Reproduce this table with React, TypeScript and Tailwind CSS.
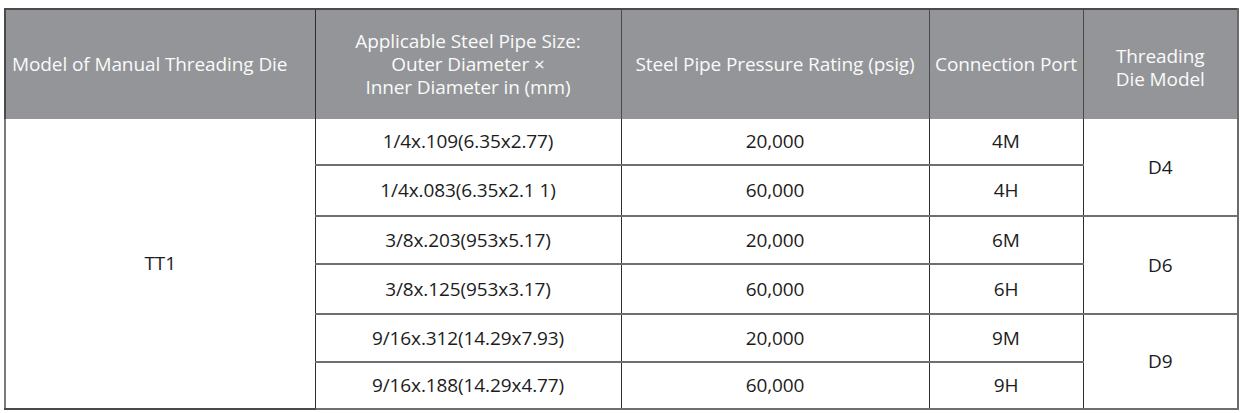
import React from "react";

const rows = [
  { size: "1/4x.109(6.35x2.77)", p: "20,000", port: "4M", h: 46 },
  { size: "1/4x.083(6.35x2.1 1)", p: "60,000", port: "4H", h: 51 },
  { size: "3/8x.203(953x5.17)", p: "20,000", port: "6M", h: 48 },
  { size: "3/8x.125(953x3.17)", p: "60,000", port: "6H", h: 50 },
  { size: "9/16x.312(14.29x7.93)", p: "20,000", port: "9M", h: 48 },
  { size: "9/16x.188(14.29x4.77)", p: "60,000", port: "9H", h: 47 },
];
const dies: Record<number, string> = { 0: "D4", 2: "D6", 4: "D9" };

export default function App() {
  const v = "border-l border-r border-[#2e2e2e]";
  return (
    <div className="w-[1242px] h-[413px] bg-white pt-[8px] pl-[4px]" style={{ fontFamily: '"Open Sans", "Noto Sans", sans-serif' }}>
      <table className="border-collapse table-fixed w-[1233px] text-[19px] text-[#1c1c1c] tracking-[-0.1px]">
        <colgroup>
          <col className="w-[310px]" />
          <col className="w-[306px]" />
          <col className="w-[308px]" />
          <col className="w-[154px]" />
          <col className="w-[155px]" />
        </colgroup>
        <thead>
          <tr className="h-[110px] bg-[#939598] text-[#fafafa] leading-[23px]">
            <th className="font-normal text-left pl-[6px] whitespace-nowrap border-t-2 border-[#4a4a4a] border-l-2 border-r border-r-[#2e2e2e]">Model of Manual Threading Die</th>
            <th className={`font-normal text-center border-t-2 border-[#4a4a4a] ${v}`}>
              <div className="flex flex-col items-center gap-0">
                <span className="block h-[23px]">Applicable Steel Pipe Size:</span>
                <span className="block h-[23px]">Outer Diameter ×</span>
                <span className="block h-[23px]">Inner Diameter in (mm)</span>
              </div>
            </th>
            <th className={`font-normal text-center whitespace-nowrap border-t-2 border-[#4a4a4a] ${v}`}>Steel Pipe Pressure Rating (psig)</th>
            <th className={`font-normal text-center whitespace-nowrap border-t-2 border-[#4a4a4a] ${v}`}>Connection Port</th>
            <th className="font-normal text-center border-t-2 border-[#4a4a4a] border-l border-l-[#2e2e2e] border-r-2 border-r-[#6a6a6a] pt-[6px]">
              <div className="flex flex-col items-center">
                <span className="block h-[23px]">Threading</span>
                <span className="block h-[23px]">Die Model</span>
              </div>
            </th>
          </tr>
        </thead>
        <tbody>
          {rows.map((r, i) => (
            <tr key={i} style={{ height: r.h }} className="border-b-2 border-[#6f6f6f]">
              {i === 0 && (
                <td rowSpan={6} className="text-center border-l-2 border-l-[#7a7a7a] border-r border-r-[#2e2e2e] border-b-2 border-b-[#4a4a4a]">TT1</td>
              )}
              <td className={`text-center whitespace-nowrap ${v}`}>{r.size}</td>
              <td className={`text-center ${v}`}>{r.p}</td>
              <td className={`text-center ${v}`}>{r.port}</td>
              {dies[i] && (
                <td rowSpan={2} className="text-center border-l border-l-[#2e2e2e] border-r-2 border-r-[#6a6a6a] border-b-2 border-b-[#6f6f6f]">{dies[i]}</td>
              )}
            </tr>
          ))}
        </tbody>
      </table>
    </div>
  );
}
